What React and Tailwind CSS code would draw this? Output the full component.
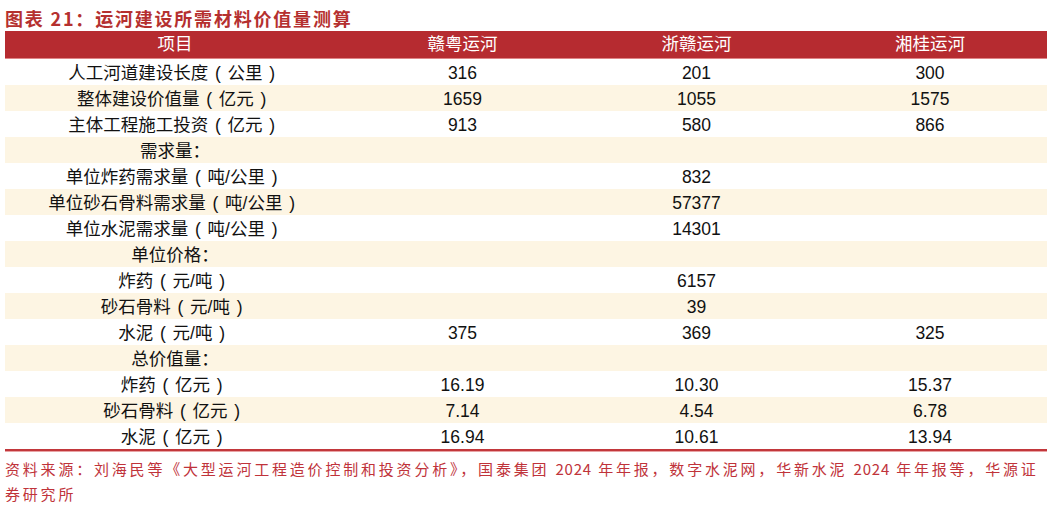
import React from "react";

const rows = [
  ["人工河道建设长度（公里）", "316", "201", "300"],
  ["整体建设价值量（亿元）", "1659", "1055", "1575"],
  ["主体工程施工投资（亿元）", "913", "580", "866"],
  ["需求量：", "", "", ""],
  ["单位炸药需求量（吨/公里）", "", "832", ""],
  ["单位砂石骨料需求量（吨/公里）", "", "57377", ""],
  ["单位水泥需求量（吨/公里）", "", "14301", ""],
  ["单位价格：", "", "", ""],
  ["炸药（元/吨）", "", "6157", ""],
  ["砂石骨料（元/吨）", "", "39", ""],
  ["水泥（元/吨）", "375", "369", "325"],
  ["总价值量：", "", "", ""],
  ["炸药（亿元）", "16.19", "10.30", "15.37"],
  ["砂石骨料（亿元）", "7.14", "4.54", "6.78"],
  ["水泥（亿元）", "16.94", "10.61", "13.94"],
];

const font = { fontFamily: '"Liberation Sans", "Noto Sans CJK SC", sans-serif' };

// full-width parens in the source are drawn centered in their cell
function Label({ text }) {
  const parts = text.split(/([（）])/);
  return (
    <>
      {parts.map((p, i) =>
        p === "（" ? (
          <span key={i} className="inline-block w-[1.1em] text-center">(</span>
        ) : p === "）" ? (
          <span key={i} className="inline-block w-[1.1em] text-center">)</span>
        ) : (
          <span key={i}>{p}</span>
        )
      )}
    </>
  );
}

export default function App() {
  return (
    <div className="w-[1053px] h-[510px] bg-white overflow-hidden" style={font}>
      <div className="px-[5px] pt-[5px]">
        <h1
          className="text-[18px] leading-[26px] font-bold text-[#b5302f] tracking-[1.8px]"
          style={{ fontFamily: '"Noto Sans CJK SC", sans-serif' }}
        >
          图表 21：运河建设所需材料价值量测算
        </h1>

        <div className="w-[1042px]">
          <div className="grid grid-cols-[340px_235px_233px_234px] h-[28px] bg-[#b62b30] border-b border-[#df8486] text-white text-[17.5px] items-center text-center">
            <div>项目</div>
            <div>赣粤运河</div>
            <div>浙赣运河</div>
            <div>湘桂运河</div>
          </div>

          {rows.map((r, i) => (
            <div
              key={i}
              className={`grid grid-cols-[340px_235px_233px_234px] h-[26px] items-center text-center text-[17.5px] text-[#111] ${
                i % 2 === 1 ? "bg-[#fdf5e3]" : "bg-white"
              }`}
            >
              <div className="pt-[1px]">
                <Label text={r[0]} />
              </div>
              <div className="pt-[1px]">{r[1]}</div>
              <div className="pt-[1px]">{r[2]}</div>
              <div className="pt-[1px]">{r[3]}</div>
            </div>
          ))}

          <div className="h-[3px] border-t-2 border-[#c2373b] border-b border-b-[#e9a3a5]"></div>
        </div>

        <p
          className="mt-[4px] w-[1046px] text-[15px] leading-[25px] text-[#c0333a] tracking-[2.8px]"
          style={{ fontFamily: '"Noto Sans CJK SC", sans-serif' }}
        >
          资料来源：刘海民等《大型运河工程造价控制和投资分析》，国泰集团 <span className="tracking-[0.8px]">2024</span> 年年报，数字水泥网，华新水泥 <span className="tracking-[0.8px]">2024</span> 年年报等，华源证券研究所
        </p>
      </div>
    </div>
  );
}
